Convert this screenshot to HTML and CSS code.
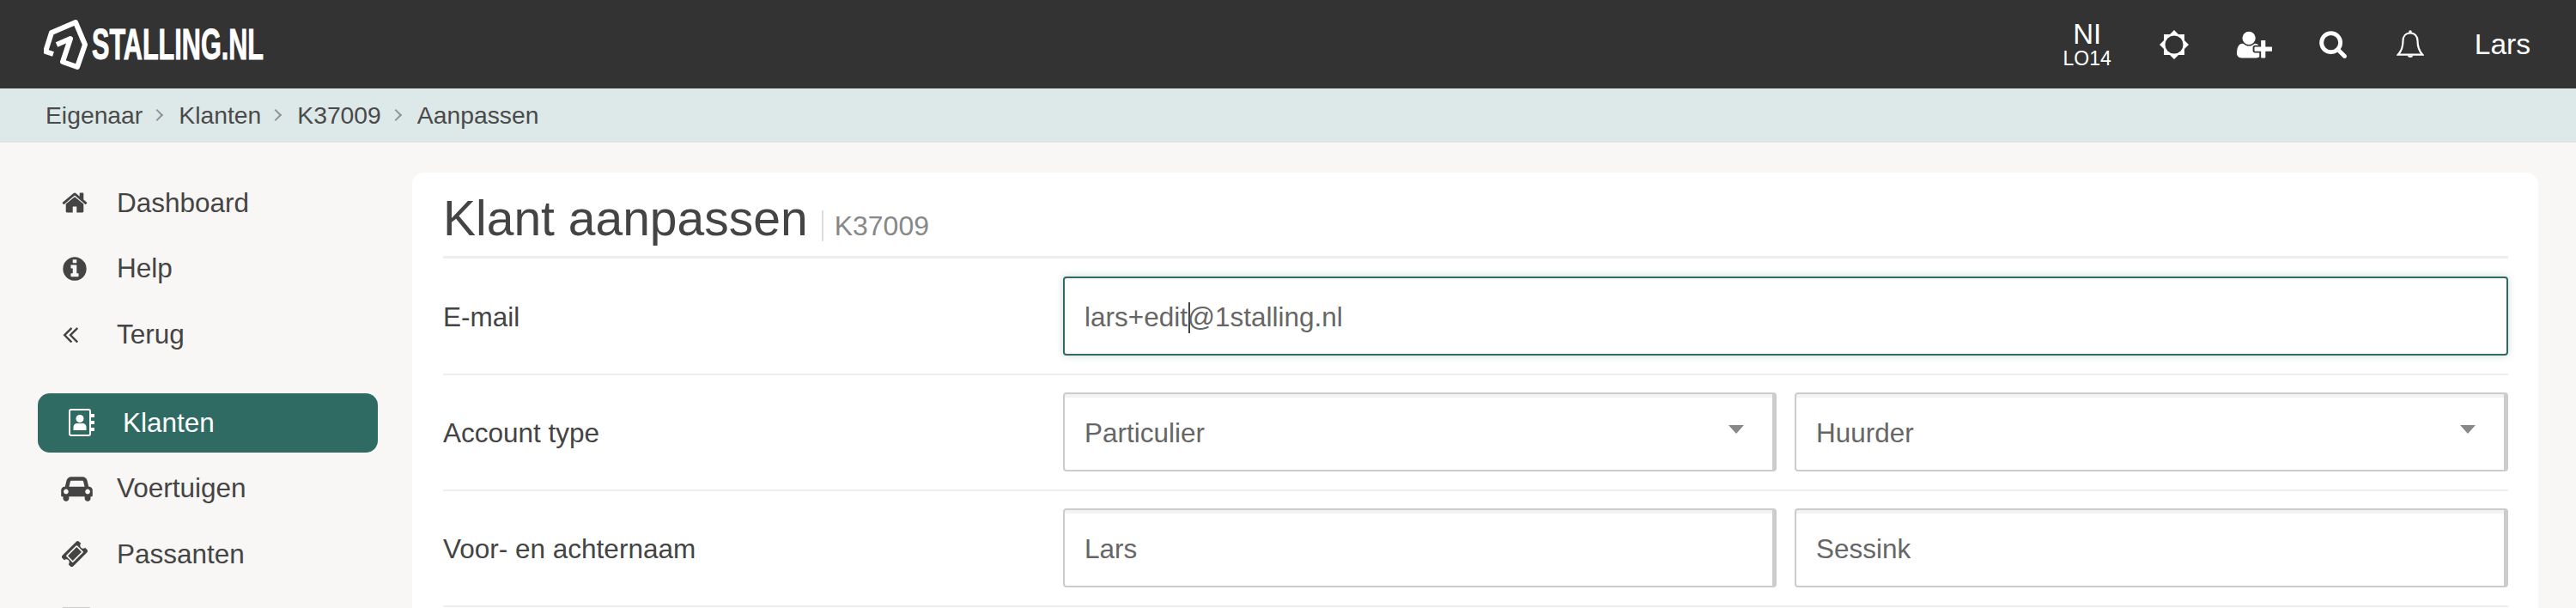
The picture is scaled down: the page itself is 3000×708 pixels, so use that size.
FILE: index.html
```html
<!DOCTYPE html>
<html lang="nl">
<head>
  <meta charset="UTF-8" />
  <title>Klant aanpassen</title>
  <link rel="stylesheet" href="styles.css">
</head>
<body>
  <header class="topbar">
    <a class="logo">
      <svg class="logo-mark" viewBox="0 0 52 60"><path d="M11 40 L2 37 L9 15 L37 3 L48 29 L39 55 L22 49 L31 22 L15 29"/></svg>
      <span class="logo-text">STALLING.NL</span>
    </a>
    <nav class="topnav">
      <div class="location"><span class="location-main">NI</span><span class="location-sub">LO14</span></div>
      <svg class="ico-sun" viewBox="0 0 34 34"><path d="M17 0L22 5L29 5L29 12L34 17L29 22L29 29L22 29L17 34L12 29L5 29L5 22L0 17L5 12L5 5L12 5Z"/><circle cx="17" cy="17" r="10.500" class="sun-hole"/></svg>
      <svg class="ico-user" viewBox="0 0 2048 1792"><path d="M704 896q-159 0-271.500-112.500t-112.500-271.500 112.500-271.500 271.500-112.500 271.500 112.500 112.500 271.500-112.500 271.500-271.500 112.500zm960 128h352q13 0 22.500 9.500t9.500 22.500v192q0 13-9.500 22.500t-22.500 9.500h-352v352q0 13-9.500 22.500t-22.500 9.500h-192q-13 0-22.500-9.500t-9.500-22.500v-352h-352q-13 0-22.500-9.500t-9.500-22.500v-192q0-13 9.500-22.500t22.500-9.500h352v-352q0-13 9.500-22.500t22.500-9.500h192q13 0 22.500 9.500t9.500 22.500v352zm-736 224q0 52 38 90t90 38h256v238q-68 50-171 50h-874q-121 0-194-69t-73-190q0-53 3.500-103.500t14-109 26.500-108.500 43-97.500 62-81 85.500-53.500 111.500-20q19 0 39 17 79 61 154.500 91.500t164.500 30.500 164.500-30.500 154.500-91.500q20-17 39-17 132 0 217 96h-223q-52 0-90 38t-38 90v192z"/></svg>
      <svg class="ico-search" viewBox="0 0 1728 1728"><path d="M1216 832q0-185-131.500-316.500t-316.500-131.500-316.500 131.500-131.500 316.500 131.500 316.500 316.500 131.500 316.500-131.500 131.500-316.500zm512 832q0 52-38 90t-90 38q-54 0-90-38l-343-342q-179 124-399 124-143 0-273.500-55.500t-225-150-150-225-55.500-273.500 55.500-273.500 150-225 225-150 273.500-55.500 273.500 55.500 225 150 150 225 55.500 273.500q0 220-124 399l343 343q37 37 37 90z" transform="translate(-1 -64)"/></svg>
      <svg class="ico-bell" viewBox="0 0 32 34"><path class="bell-line" d="M16 3.500c-5.500 0-8.500 4-8.500 9 0 8-1.800 12-5.800 16.200h28.600c-4-4.200-5.800-8.200-5.800-16.200 0-5-3-9-8.500-9z"/><circle cx="16" cy="2" r="1.800"/><path d="M12.500 29.500a3.700 3.700 0 0 0 7 0z"/></svg>
      <span class="user-name">Lars</span>
    </nav>
  </header>

  <div class="breadcrumb">
    <span>Eigenaar</span><i class="crumb-sep"></i>
    <span>Klanten</span><i class="crumb-sep"></i>
    <span>K37009</span><i class="crumb-sep"></i>
    <span>Aanpassen</span>
  </div>

  <div class="page">
    <aside class="sidebar">
      <ul class="menu">
        <li><svg class="menu-ico" viewBox="0 0 1792 1792"><path d="M1472 992v480q0 26-19 45t-45 19h-384v-384h-256v384h-384q-26 0-45-19t-19-45v-480q0-1 .5-3t.5-3l575-474 575 474q1 2 1 6zm223-69l-62 74q-8 9-21 11h-3q-13 0-21-7l-692-577-692 577q-12 8-24 7-13-2-21-11l-62-74q-8-10-7-23.500t11-21.500l719-599q32-26 76-26t76 26l244 204v-195q0-14 9-23t23-9h192q14 0 23 9t9 23v408l219 182q10 8 11 21.500t-7 23.500z"/></svg>Dashboard</li>
        <li><svg class="menu-ico" viewBox="0 0 1792 1792"><path d="M1152 1376v-160q0-14-9-23t-23-9h-96v-512q0-14-9-23t-23-9h-320q-14 0-23 9t-9 23v160q0 14 9 23t23 9h96v320h-96q-14 0-23 9t-9 23v160q0 14 9 23t23 9h448q14 0 23-9t9-23zm-128-896v-160q0-14-9-23t-23-9h-192q-14 0-23 9t-9 23v160q0 14 9 23t23 9h192q14 0 23-9t9-23zm640 416q0 209-103 385.500t-279.500 279.500-385.500 103-385.500-103-279.500-279.500-103-385.500 103-385.500 279.500-279.500 385.500-103 385.500 103 279.500 279.500 103 385.500z"/></svg>Help</li>
        <li><svg class="menu-ico" viewBox="0 0 1792 1792"><path d="M1011 1376q0 13-10 23l-50 50q-10 10-23 10t-23-10l-466-466q-10-10-10-23t10-23l466-466q10-10 23-10t23 10l50 50q10 10 10 23t-10 23l-393 393 393 393q10 10 10 23zm384 0q0 13-10 23l-50 50q-10 10-23 10t-23-10l-466-466q-10-10-10-23t10-23l466-466q10-10 23-10t23 10l50 50q10 10 10 23t-10 23l-393 393 393 393q10 10 10 23z" transform="translate(-280 0)"/></svg>Terug</li>
      </ul>
      <ul class="menu menu-main">
        <li class="active"><svg class="menu-ico" viewBox="0 0 30 32"><rect class="book" x="1" y="1" width="24" height="30" rx="2"/><circle cx="13" cy="11.500" r="4.500"/><path d="M5.500 25v-3.500c0-3 2-4.500 4-4.500h7c2 0 4 1.500 4 4.500V25z"/><path d="M26 6h4v4h-4zM26 14h4v4h-4zM26 22h4v4h-4z"/></svg>Klanten</li>
        <li><svg class="menu-ico ico-car" viewBox="0 0 2048 1792"><path d="M480 1088q0-66-47-113t-113-47-113 47-47 113 47 113 113 47 113-47 47-113zm36-320h1016l-89-357q-2-8-14-17.500t-21-9.500h-768q-9 0-21 9.500t-14 17.500zm1372 320q0-66-47-113t-113-47-113 47-47 113 47 113 113 47 113-47 47-113zm160-96v384q0 14-9 23t-23 9h-96v128q0 80-56 136t-136 56-136-56-56-136v-128h-1024v128q0 80-56 136t-136 56-136-56-56-136v-128h-96q-14 0-23-9t-9-23v-384q0-93 65.500-158.500t158.500-65.500h28l105-419q23-94 104-157.500t179-63.500h768q98 0 179 63.500t104 157.500l105 419h28q93 0 158.500 65.500t65.500 158.500z"/></svg>Voertuigen</li>
        <li><svg class="menu-ico" viewBox="0 0 1792 1792"><path d="M1024 452l316 316-572 572-316-316zm-211 979l618-618q19-19 19-45t-19-45l-362-362q-18-18-45-18t-45 18l-618 618q-19 19-19 45t19 45l362 362q18 18 45 18t45-18zm889-637l-907 908q-37 37-90.500 37t-90.500-37l-126-126q56-56 56-136t-56-136-136-56-136 56l-125-126q-37-37-37-90.500t37-90.500l907-906q37-37 90.500-37t90.500 37l125 125q-56 56-56 136t56 136 136 56 136-56l126 125q37 37 37 90.500t-37 90.500z"/></svg>Passanten</li>
      </ul>
      <div class="menu-next"></div>
    </aside>

    <main class="card">
      <h1 class="title">Klant aanpassen<small>K37009</small></h1>

      <div class="row">
        <label>E-mail</label>
        <div class="fields">
          <div class="field focus">lars+edit<i class="caret"></i>@1stalling.nl</div>
        </div>
      </div>
      <div class="row">
        <label>Account type</label>
        <div class="fields two">
          <div class="field select">Particulier<i class="arrow"></i></div>
          <div class="field select">Huurder<i class="arrow"></i></div>
        </div>
      </div>
      <div class="row">
        <label>Voor- en achternaam</label>
        <div class="fields two">
          <div class="field">Lars</div>
          <div class="field">Sessink</div>
        </div>
      </div>
    </main>
  </div>
</body>
</html>
```

FILE: styles.css
```css
html, body {
  height: 708px;
  overflow: hidden;
}

body {
  margin: 0;
  font-family: 'Liberation Sans', Arial, sans-serif;
  font-size: 31.500px;
  color: #444;
  background-color: #f8f7f5;
}

/* Topbar */
.topbar {
  height: 103px;
  background-color: #333;
  color: white;
  display: flex;
  align-items: center;
  justify-content: space-between;
  padding: 0 53px 0 51px;
}

.logo {
  display: flex;
  align-items: center;
}

.logo-mark {
  width: 52px;
  height: 60px;
  margin-top: 2px;
}

.logo-mark path {
  fill: none;
  stroke: white;
  stroke-width: 6;
  stroke-linejoin: round;
}

.logo-text {
  font-size: 50px;
  font-weight: bold;
  line-height: 1;
  margin-left: 4px;
  display: inline-block;
  transform: scaleX(0.612);
  transform-origin: left center;
  -webkit-text-stroke: 1px white;
  width: 200px;
  white-space: nowrap;
}

.topnav {
  display: flex;
  align-items: center;
  gap: 56px;
}

.topnav svg {
  fill: white;
  display: block;
}

.location {
  display: flex;
  flex-direction: column;
  align-items: center;
  line-height: 1;
}

.location-main {
  font-size: 33px;
}

.location-sub {
  font-size: 23px;
  margin-top: 1px;
}

.ico-sun {
  width: 34px;
  height: 34px;
}

.topnav .sun-hole {
  fill: #333;
}

.ico-user {
  width: 41px;
  height: 36px;
}

.topnav .ico-search {
  width: 33px;
  height: 33px;
  margin: 0 2px 0 -2px;
}

.ico-bell {
  width: 32px;
  height: 34px;
}

.topnav .bell-line {
  fill: #333;
  stroke: white;
  stroke-width: 2.200;
}

.user-name {
  font-size: 33.500px;
  margin-left: 3px;
}

/* Breadcrumb */
.breadcrumb {
  height: 61px;
  background-color: #dde9e8;
  border-bottom: 2px solid #e2e2e0;
  display: flex;
  align-items: center;
  padding-left: 53px;
  font-size: 28.300px;
  color: #4a4a4a;
}

.breadcrumb span {
  padding-top: 2px;
}

.crumb-sep {
  width: 8px;
  height: 8px;
  margin: 0 20px 0 12px;
  border-top: 2px solid #8f9494;
  border-right: 2px solid #8f9494;
  transform: rotate(45deg);
}

/* Layout */
.page {
  display: flex;
  height: 542px;
}

.sidebar {
  width: 480px;
  flex-shrink: 0;
  padding-top: 32px;
  box-sizing: border-box;
}

.menu {
  list-style: none;
  margin: 0;
  padding: 0 0 0 44px;
  width: 396px;
}

.menu li {
  height: 76.500px;
  display: flex;
  align-items: center;
  padding-left: 27px;
  color: #444;
}

.menu-main {
  margin-top: 30px;
}

.menu-next {
  width: 32px;
  height: 1px;
  margin: 23.500px 0 0 73px;
  background-color: #ccc;
}

.menu-ico {
  width: 32px;
  height: 32px;
  margin-right: 33px;
  fill: #444;
  flex-shrink: 0;
}

.ico-car {
  width: 37px;
  margin-right: 28px;
}

.menu li.active {
  height: 69px;
  margin-bottom: 4px;
  background-color: #2f6b63;
  border-radius: 14px;
  color: white;
  padding-left: 35px;
}

.menu li.active .menu-ico {
  fill: white;
  margin-right: 32px;
}

.menu li.active .book {
  fill: none;
  stroke: white;
  stroke-width: 2;
}

/* Card */
.card {
  flex: 1;
  margin: 35px 44px 0 0;
  padding: 0 35px 0 36px;
  background-color: white;
  border-radius: 14px 14px 0 0;
}

.title {
  margin: 0;
  height: 100px;
  box-sizing: border-box;
  padding-top: 20px;
  border-bottom: 3px solid #eee;
  font-size: 57px;
  font-weight: normal;
  line-height: 66px;
  color: #444;
}

.title small {
  font-size: 32px;
  color: #888;
  margin-left: 16px;
  padding-left: 13px;
  border-left: 2px solid #ddd;
}

.row {
  display: flex;
  align-items: center;
  padding: 20px 0 21px;
  border-bottom: 2px solid #eee;
}

.title + .row {
  padding-top: 21px;
}

.row label {
  width: 722px;
  flex-shrink: 0;
  padding-top: 2px;
}

.fields {
  flex: 1;
  display: grid;
  gap: 21px;
}

.fields.two {
  grid-template-columns: 1fr 1fr;
}

.field {
  height: 92px;
  box-sizing: border-box;
  padding: 3px 33px 0 23px;
  display: flex;
  align-items: center;
  border: 2px solid #ccc;
  border-right-width: 5px;
  border-radius: 4px;
  box-shadow: inset 0 4px 0 #f3f3f3;
  color: #666;
  background-color: white;
  white-space: pre;
}

.field.focus {
  border: 2px solid #2f6b63;
  box-shadow: 0 0 8px rgba(47, 107, 99, 0.25);
}

.caret {
  width: 2px;
  height: 36px;
  margin: 0 -3px 0 1px;
  background-color: #444;
}

.select {
  justify-content: space-between;
}

.arrow {
  width: 0;
  height: 0;
  margin-bottom: 10px;
  border-left: 9.500px solid transparent;
  border-right: 9.500px solid transparent;
  border-top: 10px solid #888;
}
```
